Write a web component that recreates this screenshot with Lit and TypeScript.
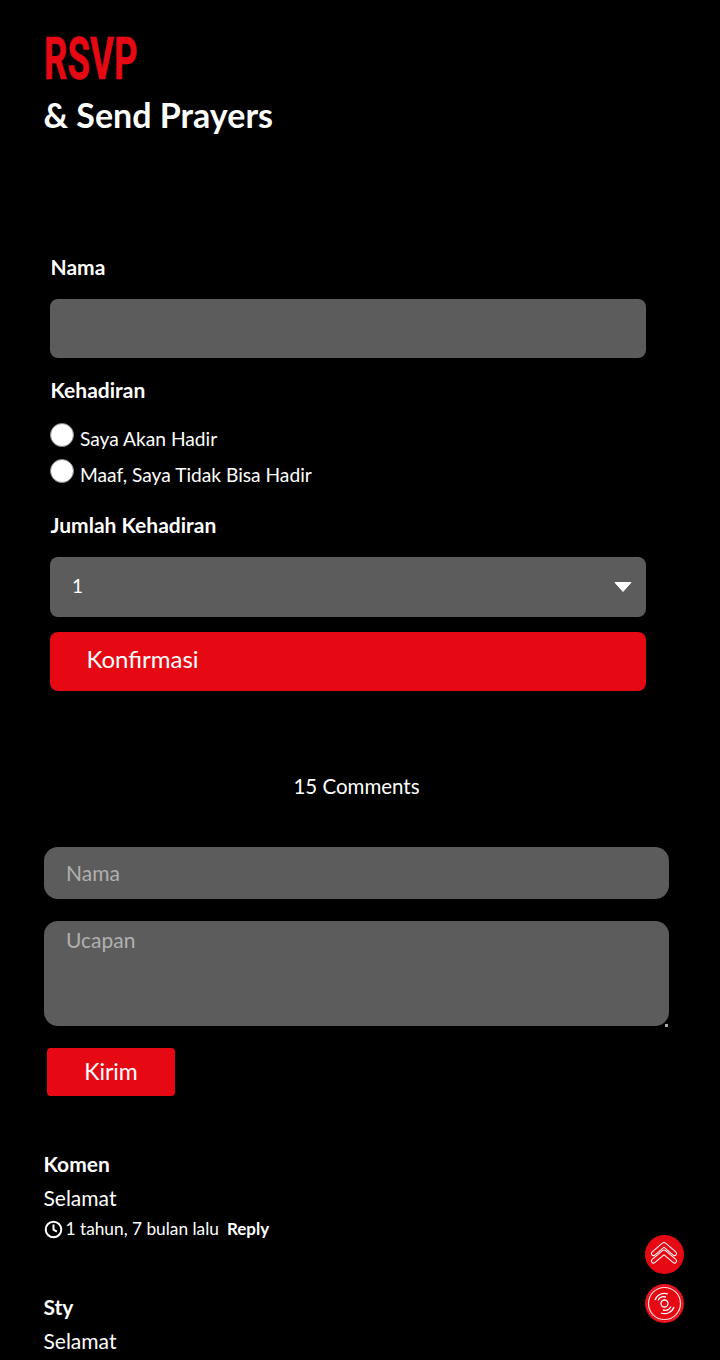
import { LitElement, html, css } from "lit";
import { customElement } from "lit/decorators.js";

@customElement("app-root")
export class AppRoot extends LitElement {
  static styles = css`
    :host { display: block; height: 1360px; overflow: hidden; background: #000; color: #fff; font-family: Lato, "Noto Sans", sans-serif; position: relative; }
    * { box-sizing: border-box; }
    .head { padding: 27px 0 0 44px; height: 255px; }
    .rsvp { font-family: "Liberation Sans Narrow", Roboto, sans-serif; font-weight: 700; font-size: 60px; line-height: 64px; color: #e60914; display: block; width: max-content; transform-origin: left center; transform: scaleX(.61); margin: 0; -webkit-text-stroke: .5px #e60914; }
    .sub { font-size: 34px; font-weight: 700; line-height: 40px; margin: 4px 0 0 -.5px; }
    .form { padding: 0 74px 0 50px; display: flex; flex-direction: column; }
    .t { font-size: 21px; font-weight: 700; line-height: 24px; padding-left: .5px; display: block; }
    .field { height: 59px; border-radius: 8px; background: #5c5c5c; border: 0; display: flex; align-items: center; justify-content: space-between; padding: 0 14px 0 22px; font-size: 19px; color: #fff; width: 100%; font-family: inherit; }
    .name { margin-top: 20px; }
    .kehadiran { margin-top: 20px; }
    .radios { margin-top: 21px; display: flex; flex-direction: column; gap: 8px; }
    .radio { display: flex; align-items: flex-start; gap: 6px; font-size: 19.2px; line-height: 24px; }
    .dot { width: 24px; height: 24px; border-radius: 50%; background: #fff; border: 1px solid #888; }
    .radio span:last-child { padding-top: 4px; }
    .jumlah { margin-top: 26px; }
    .select { margin-top: 20px; height: 60px; }
    .select span { padding-bottom: 4px; }
    .konf { margin-top: 15px; height: 59px; background: #e60914; border-radius: 8px; font-size: 24px; color: #fff; border: 0; text-align: left; padding: 0 0 6px 36.5px; font-family: inherit; }
    .comments { padding: 0 51px 0 44px; margin-top: 82px; }
    .count { text-align: center; font-size: 20.5px; line-height: 26px; }
    .comments input, .comments textarea { display: block; width: 100%; background: #5c5c5c; border: 0; color: #fff; font: 21px/26px Lato, sans-serif; padding: 0 22px; outline: 0; }
    .comments input::placeholder, .comments textarea::placeholder { color: #b0b0b0; opacity: 1; }
    .comments input { height: 52px; border-radius: 14px; margin-top: 48px; padding-bottom: 2px; }
    .wrap { position: relative; margin-top: 22px; }
    .comments textarea { height: 105px; border-radius: 14px; padding-top: 6px; resize: none; }
    .grip { position: absolute; right: 1px; bottom: -1px; width: 3px; height: 3px; background: #aaa; }
    .kirim { display: block; margin: 22px 0 0 3px; width: 128px; height: 48px; border-radius: 4px; background: #e60914; color: #fff; border: 0; padding: 0 0 2px; font: 23px Lato, sans-serif; }
    .c { margin-top: 55px; margin-left: -.5px; }
    .c + .c { margin-top: 54px; }
    .who { font-size: 21px; font-weight: 700; line-height: 26px; }
    .msg { font-size: 21px; line-height: 26px; margin-top: 8px; }
    .meta { font-size: 17.3px; line-height: 22px; margin-top: 7px; display: flex; align-items: center; }
    .meta svg { margin-right: 3px; }
    .meta b { margin-left: 8px; font-size: 17px; }
    .fab { position: absolute; left: 645px; width: 39px; height: 39px; border-radius: 50%; background: #e60914; display: block; }
    .up { top: 1235px; }
    .disc { top: 1284px; }
  `;

  render() {
    return html`
      <div class="head">
        <h1 class="rsvp">RSVP</h1>
        <h2 class="sub">&amp; Send Prayers</h2>
      </div>
      <div class="form">
        <label class="t">Nama</label>
        <input class="field name" />
        <label class="t kehadiran">Kehadiran</label>
        <div class="radios">
          <div class="radio"><span class="dot"></span><span>Saya Akan Hadir</span></div>
          <div class="radio"><span class="dot"></span><span>Maaf, Saya Tidak Bisa Hadir</span></div>
        </div>
        <label class="t jumlah">Jumlah Kehadiran</label>
        <div class="field select">
          <span>1</span>
          <svg width="18" height="10" viewBox="0 0 18 10"><path d="M1 .5h16L9 9.5z" fill="#fff" stroke="#fff" stroke-linejoin="round" /></svg>
        </div>
        <button class="konf">Konfirmasi</button>
      </div>
      <div class="comments">
        <div class="count">15 Comments</div>
        <input placeholder="Nama" />
        <div class="wrap">
          <textarea placeholder="Ucapan"></textarea>
          <span class="grip"></span>
        </div>
        <button class="kirim">Kirim</button>
        <div class="c">
          <div class="who">Komen</div>
          <div class="msg">Selamat</div>
          <div class="meta">
            <svg width="19" height="19" viewBox="0 0 19 19" fill="none" stroke="#fff" stroke-width="2"><circle cx="9.5" cy="9.5" r="7.8" /><path d="M9.5 4.5v5.2l3.4 2" /></svg>
            1 tahun, 7 bulan lalu <b>Reply</b>
          </div>
        </div>
        <div class="c">
          <div class="who">Sty</div>
          <div class="msg">Selamat</div>
        </div>
      </div>
      <svg class="fab up" viewBox="0 0 39 39" fill="none" stroke-linejoin="round" stroke-linecap="round">
        <path d="M8.5 18.5 19 9.5l10.5 9" stroke="#fff" stroke-width="5" />
        <path d="M8.5 18.5 19 9.5l10.5 9" stroke="#e60914" stroke-width="3" />
        <path d="M8.5 26 19 17l10.5 9" stroke="#fff" stroke-width="5" />
        <path d="M8.5 26 19 17l10.5 9" stroke="#e60914" stroke-width="3" />
      </svg>
      <svg class="fab disc" viewBox="0 0 39 39" fill="none" stroke="#fff">
        <circle cx="19.5" cy="19.5" r="16" stroke-width="1.2" opacity=".85" />
        <circle cx="19.5" cy="19.5" r="18" stroke-width=".8" opacity=".35" stroke-dasharray="1 1.5" />
        <circle cx="19.5" cy="19.5" r="3.5" stroke-width="1.3" />
        <path d="M10 16a10 10 0 0 1 13-6M13 16.5a7 7 0 0 1 8-3.5M29 23a10 10 0 0 1-13 6M26 22.5a7 7 0 0 1-8 3.5" stroke-width="1.3" />
      </svg>
    `;
  }
}
